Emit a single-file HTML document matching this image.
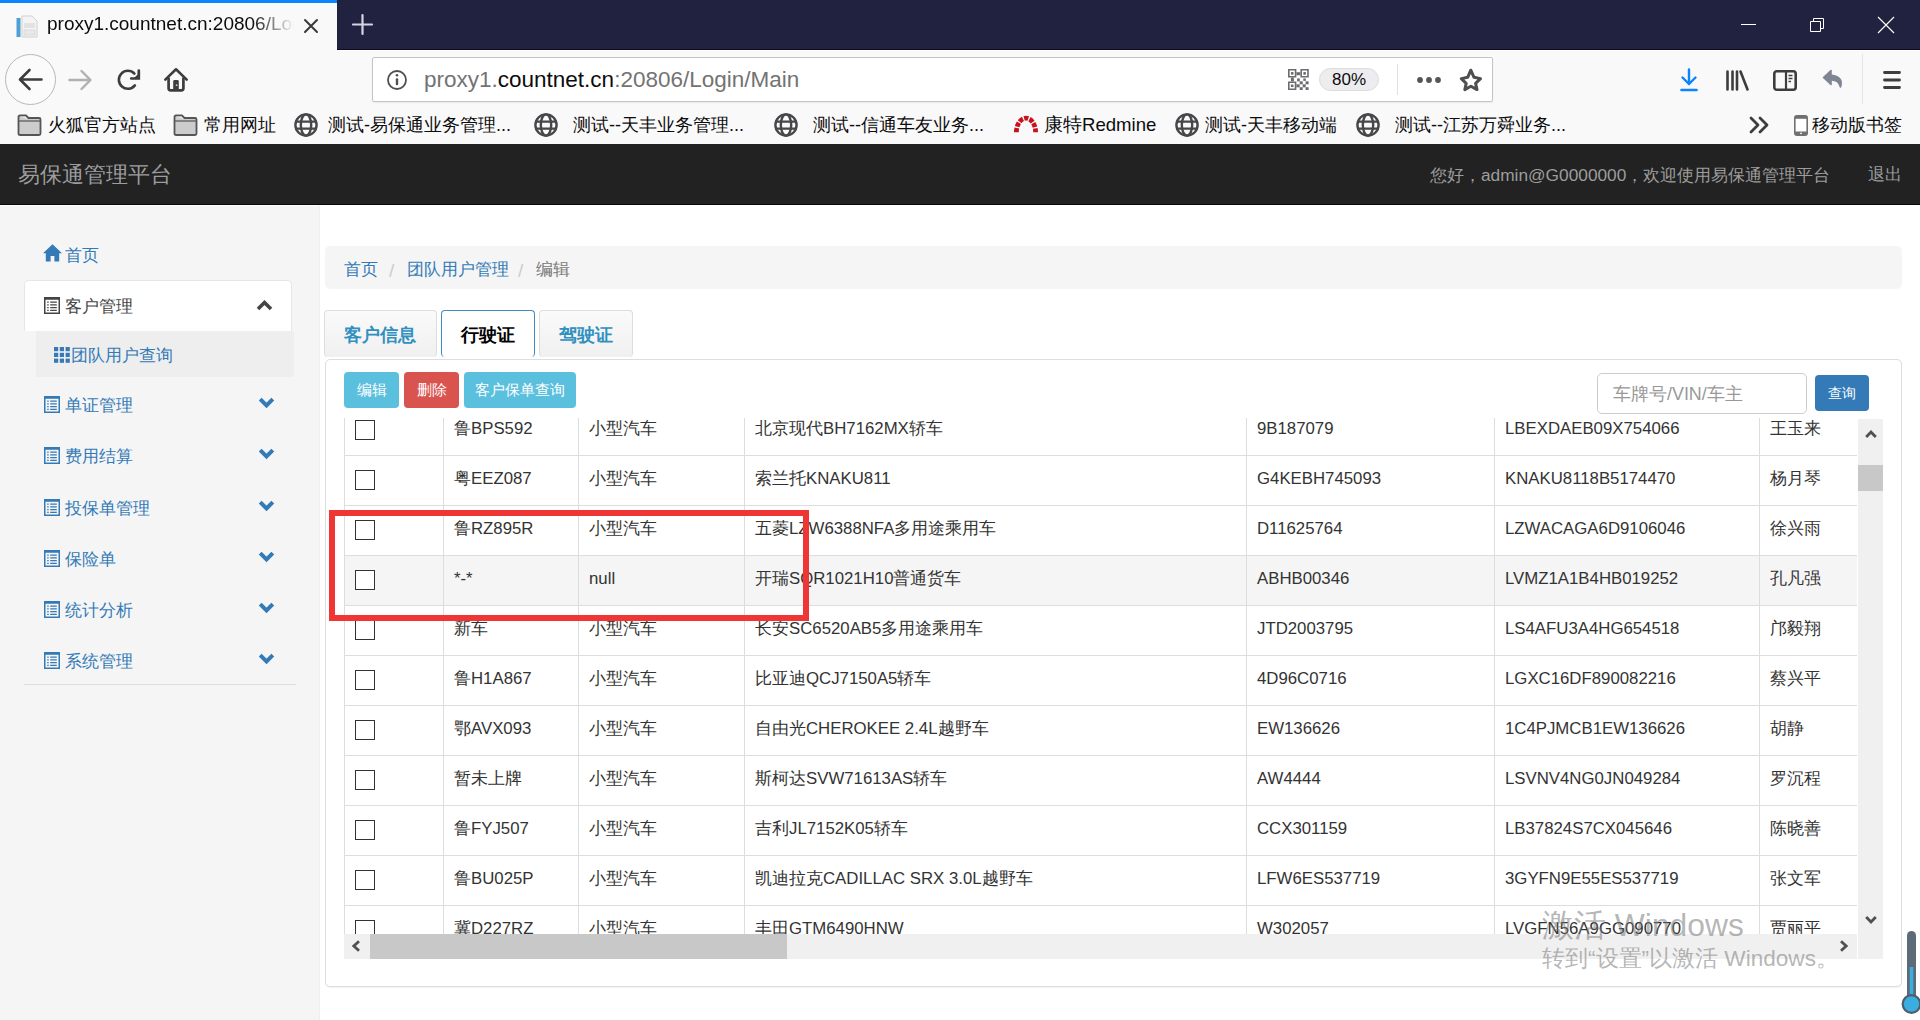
<!DOCTYPE html><html><head><meta charset="utf-8"><title>proxy1.countnet.cn</title><style>
*{box-sizing:border-box}
html,body{margin:0;padding:0;width:1920px;height:1020px;overflow:hidden;background:#fff;font-family:"Liberation Sans",sans-serif;color:#333}
.a{position:absolute;white-space:nowrap}
svg{position:absolute;overflow:visible}
</style></head><body>
<div class="a" style="left:0;top:0;width:1920px;height:50px;background:#212240"></div>
<div class="a" style="left:0;top:0;width:337px;height:50px;background:#f9f9fa"></div>
<div class="a" style="left:337px;top:49px;width:1583px;height:1px;background:#0d0b1c"></div>
<div class="a" style="left:0;top:0;width:337px;height:3px;background:#0a84ff"></div>
<svg style="left:16px;top:15px" width="22" height="23" viewBox="0 0 22 23"><rect x="0.5" y="3" width="4" height="19" fill="#4d9fd6"/><path d="M6 1h10l5 5v16H6z" fill="#f4f4f4" stroke="#d0d0d0" stroke-width="1"/><rect x="8" y="8" width="11" height="5" fill="#e2e2e2"/><rect x="8" y="15" width="11" height="5" fill="#e8e8e8" stroke="#d0d0d0" stroke-width="0.6"/></svg>
<div class="a" style="left:47px;top:12px;font-size:19px;line-height:24px;color:#0c0c0d;width:247px;overflow:hidden;-webkit-mask-image:linear-gradient(to right,#000 205px,transparent 247px)">proxy1.countnet.cn:20806/Login/Main</div>
<svg style="left:304px;top:19px" width="14" height="14" viewBox="0 0 14 14"><path d="M1 1L13 13M13 1L1 13" stroke="#3a3a3c" stroke-width="2" stroke-linecap="round"/></svg>
<svg style="left:352px;top:14px" width="21" height="21" viewBox="0 0 21 21"><path d="M10.5 1V20M1 10.5H20" stroke="#d4d4e4" stroke-width="2.2" stroke-linecap="round"/></svg>
<div class="a" style="left:1741px;top:24px;width:15px;height:1px;background:#fff"></div>
<svg style="left:1810px;top:18px" width="14" height="14" viewBox="0 0 14 14"><path d="M0.5 3.5h10v10h-10z M3.5 3.5v-3h10v10h-3" fill="none" stroke="#fff" stroke-width="1"/></svg>
<svg style="left:1878px;top:17px" width="16" height="16" viewBox="0 0 16 16"><path d="M0 0L16 16M16 0L0 16" stroke="#fff" stroke-width="1.1"/></svg>
<div class="a" style="left:0;top:50px;width:1920px;height:94px;background:#f9f9fa"></div>
<div class="a" style="left:337px;top:50px;width:1583px;height:1px;background:#fff"></div>
<div class="a" style="left:5px;top:54px;width:51px;height:51px;border-radius:50%;border:1px solid #b8b8bb;background:#fbfbfb"></div>
<svg style="left:18px;top:68px" width="25" height="23" viewBox="0 0 25 23"><path d="M23.5 11.5H3M11.5 2L2 11.5L11.5 21" fill="none" stroke="#3d3d3f" stroke-width="2.6" stroke-linecap="round" stroke-linejoin="round"/></svg>
<svg style="left:68px;top:69px" width="25" height="22" viewBox="0 0 25 22"><path d="M1.5 11H22M13.5 2L22.5 11L13.5 20" fill="none" stroke="#b1b1b3" stroke-width="2.4" stroke-linecap="round" stroke-linejoin="round"/></svg>
<svg style="left:117px;top:69px" width="24" height="22" viewBox="0 0 24 22"><path d="M17.4 4.6A9 9 0 1 0 17.9 16.4" fill="none" stroke="#3d3d3f" stroke-width="2.6" stroke-linecap="round"/><path d="M14.2 9.5H21.8V1.6" fill="none" stroke="#3d3d3f" stroke-width="2.7" stroke-linecap="round" stroke-linejoin="miter"/><path d="M16.5 9.6L21.8 4.5V9.6Z" fill="#3d3d3f"/></svg>
<svg style="left:164px;top:68px" width="24" height="24" viewBox="0 0 24 24"><path d="M1.3 11.6L12 1.3L22.7 11.6" fill="none" stroke="#3d3d3f" stroke-width="2.6" stroke-linecap="round" stroke-linejoin="round"/><path d="M4.6 9.5V20.2Q4.6 22.3 6.7 22.3H17.3Q19.4 22.3 19.4 20.2V9.5" fill="none" stroke="#3d3d3f" stroke-width="2.7"/><rect x="9.2" y="12" width="5.6" height="10" rx="1.4" fill="#3d3d3f"/><circle cx="12.6" cy="17.2" r="0.9" fill="#ccc"/></svg>
<div class="a" style="left:372px;top:57px;width:1121px;height:45px;border:1px solid #c4c4c8;border-radius:2px;background:#fff;box-shadow:0 1px 2px rgba(0,0,0,.06)"></div>
<svg style="left:387px;top:70px" width="20" height="20" viewBox="0 0 20 20"><circle cx="10" cy="10" r="9" fill="none" stroke="#4f4f52" stroke-width="1.8"/><rect x="8.8" y="8.3" width="2.4" height="7" rx="1" fill="#4f4f52"/><circle cx="10" cy="5.3" r="1.3" fill="#4f4f52"/></svg>
<div class="a" style="left:424px;top:66px;font-size:22.5px;line-height:28px;color:#737373">proxy1.<span style="color:#0c0c0d">countnet.cn</span>:20806/Login/Main</div>
<svg style="left:1287.7px;top:69.1px" width="21" height="21" viewBox="0 0 21 21"><g fill="#6c6c70"><path d="M0 0h8.4v8.6h-8.4zM1.6 1.6v5.4h5.2v-5.4z" fill-rule="evenodd"/><rect x="2.9" y="3.1" width="2.6" height="2.6" rx="0.6"/><path d="M12.4 0h8.4v8.6h-8.4zM14.0 1.6v5.4h5.2v-5.4z" fill-rule="evenodd"/><rect x="15.3" y="3.1" width="2.6" height="2.6" rx="0.6"/><path d="M0 12.4h8.4v8.6h-8.4zM1.6 14.0v5.4h5.2v-5.4z" fill-rule="evenodd"/><rect x="2.9" y="15.5" width="2.6" height="2.6" rx="0.6"/><rect x="8.4" y="3.2" width="4" height="3"/><rect x="2.9" y="8.6" width="3" height="3.8"/><rect x="9.1" y="9.4" width="2.7" height="3"/><rect x="15.3" y="9.4" width="2.5" height="2.5"/><rect x="11.7" y="12.3" width="3" height="3"/><rect x="17.6" y="12.3" width="3" height="3"/><rect x="8.4" y="15.3" width="3.3" height="3"/><rect x="14.7" y="15.3" width="3" height="3"/><rect x="11.7" y="18.2" width="3" height="2.8"/><rect x="17.6" y="18.2" width="3" height="2.8"/></g></svg>
<div class="a" style="left:1319px;top:68px;width:60px;height:23px;border-radius:12px;background:#ededf0;border:1px solid #dcdce0"></div>
<div class="a" style="left:1319px;top:68px;width:60px;line-height:23px;text-align:center;font-size:17px;color:#0c0c0d">80%</div>
<div class="a" style="left:1397px;top:64px;width:1px;height:31px;background:#e0e0e2"></div>
<svg style="left:1417px;top:77px" width="25" height="7" viewBox="0 0 25 7"><g fill="#555558"><circle cx="3" cy="3" r="2.9"/><circle cx="12" cy="3" r="2.9"/><circle cx="21" cy="3" r="2.9"/></g></svg>
<svg style="left:1459px;top:68px" width="24" height="24" viewBox="0 0 24 24"><path d="M11.8 2.2L15 9.3L21.5 10.6L16.6 15.4L18 21.6L11.9 18.2L5.8 21.6L7.2 15.4L2.3 10.6L8.7 9.3Z" fill="none" stroke="#4f4f52" stroke-width="3" stroke-linejoin="round"/></svg>
<svg style="left:1680px;top:68px" width="18" height="24" viewBox="0 0 18 24"><path d="M9 1.5V16M2.5 9.5L9 16L15.5 9.5" fill="none" stroke="#0a84ff" stroke-width="2.4" stroke-linecap="round" stroke-linejoin="round"/><path d="M1.5 22H16.5" stroke="#0a84ff" stroke-width="2.6" stroke-linecap="round"/></svg>
<svg style="left:1726px;top:70px" width="23" height="21" viewBox="0 0 23 21"><path d="M1.5 1.5V19.5M6.5 1.5V19.5M11 1.5V19.5M14.5 1.5L21.5 19.5" fill="none" stroke="#3d3d3f" stroke-width="2.6" stroke-linecap="round"/></svg>
<svg style="left:1773px;top:70px" width="24" height="21" viewBox="0 0 24 21"><rect x="1.3" y="1.3" width="21.4" height="18.4" rx="2.5" fill="none" stroke="#3d3d3f" stroke-width="2.6"/><path d="M13 1.5V19.5" stroke="#3d3d3f" stroke-width="2.2"/><path d="M15.5 5.5H19.5M15.5 8.5H19.5M15.5 11.5H18" stroke="#3d3d3f" stroke-width="1.5"/></svg>
<svg style="left:1822px;top:69px" width="22" height="22" viewBox="0 0 22 22"><path d="M9 1.5L1.5 8.5L9 15.5V11Q16.5 10.5 18.5 18Q22 8 9 6Z" fill="#7e8694" stroke="#7e8694" stroke-width="1.6" stroke-linejoin="round"/></svg>
<div class="a" style="left:1862px;top:54px;width:1px;height:50px;background:#e4e4e6"></div>
<svg style="left:1883px;top:71px" width="18" height="18" viewBox="0 0 18 18"><path d="M1.5 1.5H16.5M1.5 9H16.5M1.5 16.5H16.5" stroke="#3d3d3f" stroke-width="2.8" stroke-linecap="round"/></svg>
<svg style="left:17px;top:114px" width="25" height="22" viewBox="0 0 25 22"><path d="M1.5 3Q1.5 1.5 3 1.5H9L11.5 4H22Q23.5 4 23.5 5.5V19.5Q23.5 21 22 21H3Q1.5 21 1.5 19.5Z" fill="#cccccc" stroke="#555557" stroke-width="1.8" stroke-linejoin="round"/><path d="M1.8 7H23.2" stroke="#5c5c5e" stroke-width="1.3"/><path d="M2.5 2.5H8.5L10.8 5.3" fill="#e8e8e8"/></svg>
<div class="a" style="left:48px;font-size:18px;line-height:24px;color:#0c0c0d;top:113px">火狐官方站点</div>
<svg style="left:173px;top:114px" width="25" height="22" viewBox="0 0 25 22"><path d="M1.5 3Q1.5 1.5 3 1.5H9L11.5 4H22Q23.5 4 23.5 5.5V19.5Q23.5 21 22 21H3Q1.5 21 1.5 19.5Z" fill="#cccccc" stroke="#555557" stroke-width="1.8" stroke-linejoin="round"/><path d="M1.8 7H23.2" stroke="#5c5c5e" stroke-width="1.3"/><path d="M2.5 2.5H8.5L10.8 5.3" fill="#e8e8e8"/></svg>
<div class="a" style="left:204px;font-size:18px;line-height:24px;color:#0c0c0d;top:113px">常用网址</div>
<svg style="left:294px;top:113px" width="24" height="24" viewBox="0 0 24 24"><g fill="none" stroke="#474749" stroke-width="2.4"><circle cx="12" cy="12" r="10.6"/><ellipse cx="12" cy="12" rx="5.2" ry="10.6"/><path d="M1.5 8.6H22.5M1.5 15.6H22.5"/></g></svg>
<div class="a" style="left:328px;font-size:18px;line-height:24px;color:#0c0c0d;top:113px">测试-易保通业务管理...</div>
<svg style="left:534px;top:113px" width="24" height="24" viewBox="0 0 24 24"><g fill="none" stroke="#474749" stroke-width="2.4"><circle cx="12" cy="12" r="10.6"/><ellipse cx="12" cy="12" rx="5.2" ry="10.6"/><path d="M1.5 8.6H22.5M1.5 15.6H22.5"/></g></svg>
<div class="a" style="left:573px;font-size:18px;line-height:24px;color:#0c0c0d;top:113px">测试--天丰业务管理...</div>
<svg style="left:774px;top:113px" width="24" height="24" viewBox="0 0 24 24"><g fill="none" stroke="#474749" stroke-width="2.4"><circle cx="12" cy="12" r="10.6"/><ellipse cx="12" cy="12" rx="5.2" ry="10.6"/><path d="M1.5 8.6H22.5M1.5 15.6H22.5"/></g></svg>
<div class="a" style="left:813px;font-size:18px;line-height:24px;color:#0c0c0d;top:113px">测试--信通车友业务...</div>
<svg style="left:1014px;top:114px" width="24" height="19" viewBox="0 0 24 19"><path d="M2.4 18.2A9.6 14 0 0 1 21.6 18.2" fill="none" stroke="#c8101e" stroke-width="4.8" stroke-dasharray="4.3 1.25"/></svg>
<div class="a" style="left:1044px;font-size:18px;line-height:24px;color:#0c0c0d;top:113px;font-size:18.6px">康特Redmine</div>
<svg style="left:1175px;top:113px" width="24" height="24" viewBox="0 0 24 24"><g fill="none" stroke="#474749" stroke-width="2.4"><circle cx="12" cy="12" r="10.6"/><ellipse cx="12" cy="12" rx="5.2" ry="10.6"/><path d="M1.5 8.6H22.5M1.5 15.6H22.5"/></g></svg>
<div class="a" style="left:1205px;font-size:18px;line-height:24px;color:#0c0c0d;top:113px">测试-天丰移动端</div>
<svg style="left:1356px;top:113px" width="24" height="24" viewBox="0 0 24 24"><g fill="none" stroke="#474749" stroke-width="2.4"><circle cx="12" cy="12" r="10.6"/><ellipse cx="12" cy="12" rx="5.2" ry="10.6"/><path d="M1.5 8.6H22.5M1.5 15.6H22.5"/></g></svg>
<div class="a" style="left:1395px;font-size:18px;line-height:24px;color:#0c0c0d;top:113px">测试--江苏万舜业务...</div>
<svg style="left:1749px;top:116px" width="20" height="18" viewBox="0 0 20 18"><path d="M2 2L9 9L2 16M11 2L18 9L11 16" fill="none" stroke="#3d3d3f" stroke-width="2.8" stroke-linecap="round" stroke-linejoin="round"/></svg>
<svg style="left:1794px;top:115px" width="14" height="21" viewBox="0 0 14 21"><rect x="0.8" y="0.8" width="12.4" height="19.4" rx="2.5" fill="#fff" stroke="#707072" stroke-width="1.6"/><rect x="0.8" y="0.8" width="12.4" height="3" fill="#707072"/><rect x="0.8" y="16.5" width="12.4" height="3.7" fill="#707072"/><circle cx="7" cy="18.3" r="0.9" fill="#fff"/></svg>
<div class="a" style="left:1812px;font-size:18px;line-height:24px;color:#0c0c0d;top:113px">移动版书签</div>
<div class="a" style="left:0;top:144px;width:1920px;height:61px;background:#222;border-bottom:1px solid #080808"></div>
<div class="a" style="left:18px;top:161px;font-size:21.6px;line-height:28px;color:#9d9d9d">易保通管理平台</div>
<div class="a" style="left:1430px;top:163px;font-size:17.3px;line-height:24px;color:#9d9d9d">您好，admin@G0000000，欢迎使用易保通管理平台</div>
<div class="a" style="left:1868px;top:163px;font-size:16.8px;line-height:24px;color:#9d9d9d">退出</div>
<div class="a" style="left:0;top:206px;width:320px;height:814px;background:#f5f5f5;border-right:1px solid #eee"></div>
<svg style="left:43px;top:244px" width="19" height="18" viewBox="0 0 19 18"><path d="M9.5 0.3L0 9.3H2.8V17.6H7.6V12H11.4V17.6H16.2V9.3H19Z" fill="#337ab7"/></svg>
<div class="a" style="left:65px;top:245px;font-size:16.8px;line-height:22px;color:#337ab7">首页</div>
<div class="a" style="left:24px;top:280px;width:268px;height:51px;background:#fff;border:1px solid #e6e6e6;border-bottom:none;border-radius:5px 5px 0 0"></div>
<svg style="left:44px;top:297px" width="16" height="17" viewBox="0 0 16 17"><rect x="0.75" y="0.75" width="14.5" height="15.5" fill="none" stroke="#444" stroke-width="1.5"/><rect x="0.75" y="0.75" width="14.5" height="2" fill="#444"/><path d="M3.2 5.2h1.5M3.2 7.9h1.5M3.2 10.6h1.5M3.2 13.3h1.5M6.2 5.2h6.6M6.2 7.9h6.6M6.2 10.6h6.6M6.2 13.3h6.6" stroke="#444" stroke-width="1.3"/></svg>
<div class="a" style="left:65px;top:296px;font-size:16.8px;line-height:22px;color:#444">客户管理</div>
<svg style="left:256px;top:299px" width="17" height="12" viewBox="0 0 17 12"><path d="M2 10L8.5 3.5L15 10" fill="none" stroke="#444" stroke-width="3.6" stroke-linecap="butt" stroke-linejoin="miter"/></svg>
<div class="a" style="left:36px;top:331px;width:258px;height:46px;background:#eee"></div>
<svg style="left:54px;top:347px" width="16" height="16" viewBox="0 0 16 16"><g fill="#337ab7"><rect x="0" y="0" width="4.2" height="4.2"/><rect x="0" y="5.8" width="4.2" height="4.2"/><rect x="0" y="11.6" width="4.2" height="4.2"/><rect x="5.8" y="0" width="4.2" height="4.2"/><rect x="5.8" y="5.8" width="4.2" height="4.2"/><rect x="5.8" y="11.6" width="4.2" height="4.2"/><rect x="11.6" y="0" width="4.2" height="4.2"/><rect x="11.6" y="5.8" width="4.2" height="4.2"/><rect x="11.6" y="11.6" width="4.2" height="4.2"/></g></svg>
<div class="a" style="left:71px;top:345px;font-size:16.8px;line-height:22px;color:#337ab7">团队用户查询</div>
<svg style="left:44px;top:396px" width="16" height="17" viewBox="0 0 16 17"><rect x="0.75" y="0.75" width="14.5" height="15.5" fill="none" stroke="#337ab7" stroke-width="1.5"/><rect x="0.75" y="0.75" width="14.5" height="2" fill="#337ab7"/><path d="M3.2 5.2h1.5M3.2 7.9h1.5M3.2 10.6h1.5M3.2 13.3h1.5M6.2 5.2h6.6M6.2 7.9h6.6M6.2 10.6h6.6M6.2 13.3h6.6" stroke="#337ab7" stroke-width="1.3"/></svg>
<div class="a" style="left:65px;top:395px;font-size:16.8px;line-height:22px;color:#337ab7">单证管理</div>
<svg style="left:258px;top:397px" width="17" height="12" viewBox="0 0 17 12"><path d="M2.2 2.2L8.5 8.5L14.8 2.2" fill="none" stroke="#337ab7" stroke-width="4" stroke-linecap="butt" stroke-linejoin="miter"/></svg>
<svg style="left:44px;top:447px" width="16" height="17" viewBox="0 0 16 17"><rect x="0.75" y="0.75" width="14.5" height="15.5" fill="none" stroke="#337ab7" stroke-width="1.5"/><rect x="0.75" y="0.75" width="14.5" height="2" fill="#337ab7"/><path d="M3.2 5.2h1.5M3.2 7.9h1.5M3.2 10.6h1.5M3.2 13.3h1.5M6.2 5.2h6.6M6.2 7.9h6.6M6.2 10.6h6.6M6.2 13.3h6.6" stroke="#337ab7" stroke-width="1.3"/></svg>
<div class="a" style="left:65px;top:446px;font-size:16.8px;line-height:22px;color:#337ab7">费用结算</div>
<svg style="left:258px;top:448px" width="17" height="12" viewBox="0 0 17 12"><path d="M2.2 2.2L8.5 8.5L14.8 2.2" fill="none" stroke="#337ab7" stroke-width="4" stroke-linecap="butt" stroke-linejoin="miter"/></svg>
<svg style="left:44px;top:499px" width="16" height="17" viewBox="0 0 16 17"><rect x="0.75" y="0.75" width="14.5" height="15.5" fill="none" stroke="#337ab7" stroke-width="1.5"/><rect x="0.75" y="0.75" width="14.5" height="2" fill="#337ab7"/><path d="M3.2 5.2h1.5M3.2 7.9h1.5M3.2 10.6h1.5M3.2 13.3h1.5M6.2 5.2h6.6M6.2 7.9h6.6M6.2 10.6h6.6M6.2 13.3h6.6" stroke="#337ab7" stroke-width="1.3"/></svg>
<div class="a" style="left:65px;top:498px;font-size:16.8px;line-height:22px;color:#337ab7">投保单管理</div>
<svg style="left:258px;top:500px" width="17" height="12" viewBox="0 0 17 12"><path d="M2.2 2.2L8.5 8.5L14.8 2.2" fill="none" stroke="#337ab7" stroke-width="4" stroke-linecap="butt" stroke-linejoin="miter"/></svg>
<svg style="left:44px;top:550px" width="16" height="17" viewBox="0 0 16 17"><rect x="0.75" y="0.75" width="14.5" height="15.5" fill="none" stroke="#337ab7" stroke-width="1.5"/><rect x="0.75" y="0.75" width="14.5" height="2" fill="#337ab7"/><path d="M3.2 5.2h1.5M3.2 7.9h1.5M3.2 10.6h1.5M3.2 13.3h1.5M6.2 5.2h6.6M6.2 7.9h6.6M6.2 10.6h6.6M6.2 13.3h6.6" stroke="#337ab7" stroke-width="1.3"/></svg>
<div class="a" style="left:65px;top:549px;font-size:16.8px;line-height:22px;color:#337ab7">保险单</div>
<svg style="left:258px;top:551px" width="17" height="12" viewBox="0 0 17 12"><path d="M2.2 2.2L8.5 8.5L14.8 2.2" fill="none" stroke="#337ab7" stroke-width="4" stroke-linecap="butt" stroke-linejoin="miter"/></svg>
<svg style="left:44px;top:601px" width="16" height="17" viewBox="0 0 16 17"><rect x="0.75" y="0.75" width="14.5" height="15.5" fill="none" stroke="#337ab7" stroke-width="1.5"/><rect x="0.75" y="0.75" width="14.5" height="2" fill="#337ab7"/><path d="M3.2 5.2h1.5M3.2 7.9h1.5M3.2 10.6h1.5M3.2 13.3h1.5M6.2 5.2h6.6M6.2 7.9h6.6M6.2 10.6h6.6M6.2 13.3h6.6" stroke="#337ab7" stroke-width="1.3"/></svg>
<div class="a" style="left:65px;top:600px;font-size:16.8px;line-height:22px;color:#337ab7">统计分析</div>
<svg style="left:258px;top:602px" width="17" height="12" viewBox="0 0 17 12"><path d="M2.2 2.2L8.5 8.5L14.8 2.2" fill="none" stroke="#337ab7" stroke-width="4" stroke-linecap="butt" stroke-linejoin="miter"/></svg>
<svg style="left:44px;top:652px" width="16" height="17" viewBox="0 0 16 17"><rect x="0.75" y="0.75" width="14.5" height="15.5" fill="none" stroke="#337ab7" stroke-width="1.5"/><rect x="0.75" y="0.75" width="14.5" height="2" fill="#337ab7"/><path d="M3.2 5.2h1.5M3.2 7.9h1.5M3.2 10.6h1.5M3.2 13.3h1.5M6.2 5.2h6.6M6.2 7.9h6.6M6.2 10.6h6.6M6.2 13.3h6.6" stroke="#337ab7" stroke-width="1.3"/></svg>
<div class="a" style="left:65px;top:651px;font-size:16.8px;line-height:22px;color:#337ab7">系统管理</div>
<svg style="left:258px;top:653px" width="17" height="12" viewBox="0 0 17 12"><path d="M2.2 2.2L8.5 8.5L14.8 2.2" fill="none" stroke="#337ab7" stroke-width="4" stroke-linecap="butt" stroke-linejoin="miter"/></svg>
<div class="a" style="left:24px;top:684px;width:272px;height:1px;background:#ddd"></div>
<div class="a" style="left:325px;top:246px;width:1577px;height:43px;background:#f5f5f5;border-radius:5px"></div>
<div class="a" style="left:344px;font-size:16.8px;line-height:22px;top:259px;color:#337ab7">首页</div>
<div class="a" style="left:389px;font-size:16.8px;line-height:22px;top:259px;color:#ccc;font-size:19px;top:260px">/</div>
<div class="a" style="left:407px;font-size:16.8px;line-height:22px;top:259px;color:#337ab7">团队用户管理</div>
<div class="a" style="left:518px;font-size:16.8px;line-height:22px;top:259px;color:#ccc;font-size:19px;top:260px">/</div>
<div class="a" style="left:536px;font-size:16.8px;line-height:22px;top:259px;color:#777">编辑</div>
<div class="a" style="left:324px;top:310px;width:113px;height:47px;border:1px solid #ddd;border-bottom:none;border-radius:4px;background:linear-gradient(#fafafa,#f0f0f0)"></div>
<div class="a" style="left:344px;font-size:18px;line-height:24px;font-weight:bold;top:323px;color:#3090c0">客户信息</div>
<div class="a" style="left:441px;top:310px;width:94px;height:47px;border:1px solid #3c8dbc;border-bottom:none;border-radius:4px;background:#fff;z-index:2"></div>
<div class="a" style="left:461px;font-size:18px;line-height:24px;font-weight:bold;top:323px;color:#000;z-index:3">行驶证</div>
<div class="a" style="left:539px;top:310px;width:94px;height:47px;border:1px solid #ddd;border-bottom:none;border-radius:4px;background:linear-gradient(#fafafa,#f0f0f0)"></div>
<div class="a" style="left:559px;font-size:18px;line-height:24px;font-weight:bold;top:323px;color:#3090c0">驾驶证</div>
<div class="a" style="left:325px;top:359px;width:1577px;height:628px;border:1px solid #ddd;border-radius:5px;background:#fff;box-shadow:0 1px 1px rgba(0,0,0,.05)"></div>
<div class="a" style="left:344px;width:55px;background:#5bc0de;font-size:14.6px;line-height:37px;color:#fff;text-align:center;border-radius:4px;top:372px;height:36px">编辑</div>
<div class="a" style="left:404px;width:55px;background:#d9534f;font-size:14.6px;line-height:37px;color:#fff;text-align:center;border-radius:4px;top:372px;height:36px">删除</div>
<div class="a" style="left:464px;width:112px;background:#5bc0de;font-size:14.6px;line-height:37px;color:#fff;text-align:center;border-radius:4px;top:372px;height:36px">客户保单查询</div>
<div class="a" style="left:1597px;top:373px;width:210px;height:41px;border:1px solid #ccc;border-radius:5px;background:#fff"></div>
<div class="a" style="left:1613px;top:383px;font-size:17.9px;line-height:22px;color:#999">车牌号/VIN/车主</div>
<div class="a" style="left:1815px;top:375px;width:54px;height:36px;background:#337ab7;border-radius:4px;color:#fff;font-size:14.4px;line-height:36px;text-align:center">查询</div>
<div class="a" style="left:344px;top:418px;width:1513px;height:516px;overflow:hidden">
<div class="a" style="left:0;top:-12px;width:1600px;height:50px;background:#fff;border-bottom:1px solid #ddd"></div>
<div class="a" style="left:11px;top:2px;width:20px;height:20px;border:1.4px solid #333;background:#fff"></div>
<div class="a" style="left:110px;top:0px;font-size:16.8px;line-height:22px;color:#333">鲁BPS592</div>
<div class="a" style="left:245px;top:0px;font-size:16.8px;line-height:22px;color:#333">小型汽车</div>
<div class="a" style="left:411px;top:0px;font-size:16.8px;line-height:22px;color:#333">北京现代BH7162MX轿车</div>
<div class="a" style="left:913px;top:0px;font-size:16.8px;line-height:22px;color:#333">9B187079</div>
<div class="a" style="left:1161px;top:0px;font-size:16.8px;line-height:22px;color:#333">LBEXDAEB09X754066</div>
<div class="a" style="left:1426px;top:0px;font-size:16.8px;line-height:22px;color:#333">王玉来</div>
<div class="a" style="left:0;top:38px;width:1600px;height:50px;background:#fff;border-bottom:1px solid #ddd"></div>
<div class="a" style="left:11px;top:52px;width:20px;height:20px;border:1.4px solid #333;background:#fff"></div>
<div class="a" style="left:110px;top:50px;font-size:16.8px;line-height:22px;color:#333">粤EEZ087</div>
<div class="a" style="left:245px;top:50px;font-size:16.8px;line-height:22px;color:#333">小型汽车</div>
<div class="a" style="left:411px;top:50px;font-size:16.8px;line-height:22px;color:#333">索兰托KNAKU811</div>
<div class="a" style="left:913px;top:50px;font-size:16.8px;line-height:22px;color:#333">G4KEBH745093</div>
<div class="a" style="left:1161px;top:50px;font-size:16.8px;line-height:22px;color:#333">KNAKU8118B5174470</div>
<div class="a" style="left:1426px;top:50px;font-size:16.8px;line-height:22px;color:#333">杨月琴</div>
<div class="a" style="left:0;top:88px;width:1600px;height:50px;background:#fff;border-bottom:1px solid #ddd"></div>
<div class="a" style="left:11px;top:102px;width:20px;height:20px;border:1.4px solid #333;background:#fff"></div>
<div class="a" style="left:110px;top:100px;font-size:16.8px;line-height:22px;color:#333">鲁RZ895R</div>
<div class="a" style="left:245px;top:100px;font-size:16.8px;line-height:22px;color:#333">小型汽车</div>
<div class="a" style="left:411px;top:100px;font-size:16.8px;line-height:22px;color:#333">五菱LZW6388NFA多用途乘用车</div>
<div class="a" style="left:913px;top:100px;font-size:16.8px;line-height:22px;color:#333">D11625764</div>
<div class="a" style="left:1161px;top:100px;font-size:16.8px;line-height:22px;color:#333">LZWACAGA6D9106046</div>
<div class="a" style="left:1426px;top:100px;font-size:16.8px;line-height:22px;color:#333">徐兴雨</div>
<div class="a" style="left:0;top:138px;width:1600px;height:50px;background:#f5f5f5;border-bottom:1px solid #ddd"></div>
<div class="a" style="left:11px;top:152px;width:20px;height:20px;border:1.4px solid #333;background:#fff"></div>
<div class="a" style="left:110px;top:150px;font-size:16.8px;line-height:22px;color:#333">*-*</div>
<div class="a" style="left:245px;top:150px;font-size:16.8px;line-height:22px;color:#333">null</div>
<div class="a" style="left:411px;top:150px;font-size:16.8px;line-height:22px;color:#333">开瑞SQR1021H10普通货车</div>
<div class="a" style="left:913px;top:150px;font-size:16.8px;line-height:22px;color:#333">ABHB00346</div>
<div class="a" style="left:1161px;top:150px;font-size:16.8px;line-height:22px;color:#333">LVMZ1A1B4HB019252</div>
<div class="a" style="left:1426px;top:150px;font-size:16.8px;line-height:22px;color:#333">孔凡强</div>
<div class="a" style="left:0;top:188px;width:1600px;height:50px;background:#fff;border-bottom:1px solid #ddd"></div>
<div class="a" style="left:11px;top:202px;width:20px;height:20px;border:1.4px solid #333;background:#fff"></div>
<div class="a" style="left:110px;top:200px;font-size:16.8px;line-height:22px;color:#333">新车</div>
<div class="a" style="left:245px;top:200px;font-size:16.8px;line-height:22px;color:#333">小型汽车</div>
<div class="a" style="left:411px;top:200px;font-size:16.8px;line-height:22px;color:#333">长安SC6520AB5多用途乘用车</div>
<div class="a" style="left:913px;top:200px;font-size:16.8px;line-height:22px;color:#333">JTD2003795</div>
<div class="a" style="left:1161px;top:200px;font-size:16.8px;line-height:22px;color:#333">LS4AFU3A4HG654518</div>
<div class="a" style="left:1426px;top:200px;font-size:16.8px;line-height:22px;color:#333">邝毅翔</div>
<div class="a" style="left:0;top:238px;width:1600px;height:50px;background:#fff;border-bottom:1px solid #ddd"></div>
<div class="a" style="left:11px;top:252px;width:20px;height:20px;border:1.4px solid #333;background:#fff"></div>
<div class="a" style="left:110px;top:250px;font-size:16.8px;line-height:22px;color:#333">鲁H1A867</div>
<div class="a" style="left:245px;top:250px;font-size:16.8px;line-height:22px;color:#333">小型汽车</div>
<div class="a" style="left:411px;top:250px;font-size:16.8px;line-height:22px;color:#333">比亚迪QCJ7150A5轿车</div>
<div class="a" style="left:913px;top:250px;font-size:16.8px;line-height:22px;color:#333">4D96C0716</div>
<div class="a" style="left:1161px;top:250px;font-size:16.8px;line-height:22px;color:#333">LGXC16DF890082216</div>
<div class="a" style="left:1426px;top:250px;font-size:16.8px;line-height:22px;color:#333">蔡兴平</div>
<div class="a" style="left:0;top:288px;width:1600px;height:50px;background:#fff;border-bottom:1px solid #ddd"></div>
<div class="a" style="left:11px;top:302px;width:20px;height:20px;border:1.4px solid #333;background:#fff"></div>
<div class="a" style="left:110px;top:300px;font-size:16.8px;line-height:22px;color:#333">鄂AVX093</div>
<div class="a" style="left:245px;top:300px;font-size:16.8px;line-height:22px;color:#333">小型汽车</div>
<div class="a" style="left:411px;top:300px;font-size:16.8px;line-height:22px;color:#333">自由光CHEROKEE 2.4L越野车</div>
<div class="a" style="left:913px;top:300px;font-size:16.8px;line-height:22px;color:#333">EW136626</div>
<div class="a" style="left:1161px;top:300px;font-size:16.8px;line-height:22px;color:#333">1C4PJMCB1EW136626</div>
<div class="a" style="left:1426px;top:300px;font-size:16.8px;line-height:22px;color:#333">胡静</div>
<div class="a" style="left:0;top:338px;width:1600px;height:50px;background:#fff;border-bottom:1px solid #ddd"></div>
<div class="a" style="left:11px;top:352px;width:20px;height:20px;border:1.4px solid #333;background:#fff"></div>
<div class="a" style="left:110px;top:350px;font-size:16.8px;line-height:22px;color:#333">暂未上牌</div>
<div class="a" style="left:245px;top:350px;font-size:16.8px;line-height:22px;color:#333">小型汽车</div>
<div class="a" style="left:411px;top:350px;font-size:16.8px;line-height:22px;color:#333">斯柯达SVW71613AS轿车</div>
<div class="a" style="left:913px;top:350px;font-size:16.8px;line-height:22px;color:#333">AW4444</div>
<div class="a" style="left:1161px;top:350px;font-size:16.8px;line-height:22px;color:#333">LSVNV4NG0JN049284</div>
<div class="a" style="left:1426px;top:350px;font-size:16.8px;line-height:22px;color:#333">罗沉程</div>
<div class="a" style="left:0;top:388px;width:1600px;height:50px;background:#fff;border-bottom:1px solid #ddd"></div>
<div class="a" style="left:11px;top:402px;width:20px;height:20px;border:1.4px solid #333;background:#fff"></div>
<div class="a" style="left:110px;top:400px;font-size:16.8px;line-height:22px;color:#333">鲁FYJ507</div>
<div class="a" style="left:245px;top:400px;font-size:16.8px;line-height:22px;color:#333">小型汽车</div>
<div class="a" style="left:411px;top:400px;font-size:16.8px;line-height:22px;color:#333">吉利JL7152K05轿车</div>
<div class="a" style="left:913px;top:400px;font-size:16.8px;line-height:22px;color:#333">CCX301159</div>
<div class="a" style="left:1161px;top:400px;font-size:16.8px;line-height:22px;color:#333">LB37824S7CX045646</div>
<div class="a" style="left:1426px;top:400px;font-size:16.8px;line-height:22px;color:#333">陈晓善</div>
<div class="a" style="left:0;top:438px;width:1600px;height:50px;background:#fff;border-bottom:1px solid #ddd"></div>
<div class="a" style="left:11px;top:452px;width:20px;height:20px;border:1.4px solid #333;background:#fff"></div>
<div class="a" style="left:110px;top:450px;font-size:16.8px;line-height:22px;color:#333">鲁BU025P</div>
<div class="a" style="left:245px;top:450px;font-size:16.8px;line-height:22px;color:#333">小型汽车</div>
<div class="a" style="left:411px;top:450px;font-size:16.8px;line-height:22px;color:#333">凯迪拉克CADILLAC SRX 3.0L越野车</div>
<div class="a" style="left:913px;top:450px;font-size:16.8px;line-height:22px;color:#333">LFW6ES537719</div>
<div class="a" style="left:1161px;top:450px;font-size:16.8px;line-height:22px;color:#333">3GYFN9E55ES537719</div>
<div class="a" style="left:1426px;top:450px;font-size:16.8px;line-height:22px;color:#333">张文军</div>
<div class="a" style="left:0;top:488px;width:1600px;height:50px;background:#fff;border-bottom:1px solid #ddd"></div>
<div class="a" style="left:11px;top:502px;width:20px;height:20px;border:1.4px solid #333;background:#fff"></div>
<div class="a" style="left:110px;top:500px;font-size:16.8px;line-height:22px;color:#333">冀D227RZ</div>
<div class="a" style="left:245px;top:500px;font-size:16.8px;line-height:22px;color:#333">小型汽车</div>
<div class="a" style="left:411px;top:500px;font-size:16.8px;line-height:22px;color:#333">丰田GTM6490HNW</div>
<div class="a" style="left:913px;top:500px;font-size:16.8px;line-height:22px;color:#333">W302057</div>
<div class="a" style="left:1161px;top:500px;font-size:16.8px;line-height:22px;color:#333">LVGFN56A9GG090770</div>
<div class="a" style="left:1426px;top:500px;font-size:16.8px;line-height:22px;color:#333">贾丽平</div>
<div class="a" style="left:0px;top:0;width:1px;height:516px;background:#ddd"></div>
<div class="a" style="left:99px;top:0;width:1px;height:516px;background:#ddd"></div>
<div class="a" style="left:234px;top:0;width:1px;height:516px;background:#ddd"></div>
<div class="a" style="left:400px;top:0;width:1px;height:516px;background:#ddd"></div>
<div class="a" style="left:902px;top:0;width:1px;height:516px;background:#ddd"></div>
<div class="a" style="left:1150px;top:0;width:1px;height:516px;background:#ddd"></div>
<div class="a" style="left:1415px;top:0;width:1px;height:516px;background:#ddd"></div>
</div>
<div class="a" style="left:344px;top:934px;width:1513px;height:25px;background:#f0f0f0"></div>
<div class="a" style="left:370px;top:934px;width:417px;height:25px;background:#c8c8c8"></div>
<svg style="left:351px;top:940px" width="10" height="12" viewBox="0 0 10 12"><path d="M8 1.2L2.8 6L8 10.8" fill="none" stroke="#505050" stroke-width="2.8"/></svg>
<svg style="left:1839px;top:940px" width="10" height="12" viewBox="0 0 10 12"><path d="M2 1.2L7.2 6L2 10.8" fill="none" stroke="#505050" stroke-width="2.8"/></svg>
<div class="a" style="left:1858px;top:419px;width:25px;height:540px;background:#f0f0f0"></div>
<div class="a" style="left:1858px;top:465px;width:25px;height:26px;background:#c8c8c8"></div>
<svg style="left:1865px;top:429px" width="12" height="10" viewBox="0 0 12 10"><path d="M1.2 8L6 3L10.8 8" fill="none" stroke="#505050" stroke-width="2.8"/></svg>
<svg style="left:1865px;top:915px" width="12" height="10" viewBox="0 0 12 10"><path d="M1.2 2L6 7L10.8 2" fill="none" stroke="#505050" stroke-width="2.8"/></svg>
<div class="a" style="left:329px;top:510px;width:480px;height:111px;border:6.8px solid #f03535;z-index:5"></div>
<div class="a" style="left:1542px;top:905px;font-size:31.8px;line-height:40px;color:rgba(120,120,120,.55);z-index:6">激活 Windows</div>
<div class="a" style="left:1542px;top:944px;font-size:22.6px;line-height:29px;color:rgba(120,120,120,.55);z-index:6">转到“设置”以激活 Windows。</div>
<svg style="left:1902px;top:932px" width="20" height="85" viewBox="0 0 20 85"><path d="M9.5 3.5V66" stroke="#5d6b78" stroke-width="9" stroke-linecap="round"/><path d="M9.5 35V66" stroke="#3aaee0" stroke-width="3.5"/><circle cx="9.5" cy="72" r="8.8" fill="#3aaee0" stroke="#4d5d6c" stroke-width="2.2"/></svg>
</body></html>
